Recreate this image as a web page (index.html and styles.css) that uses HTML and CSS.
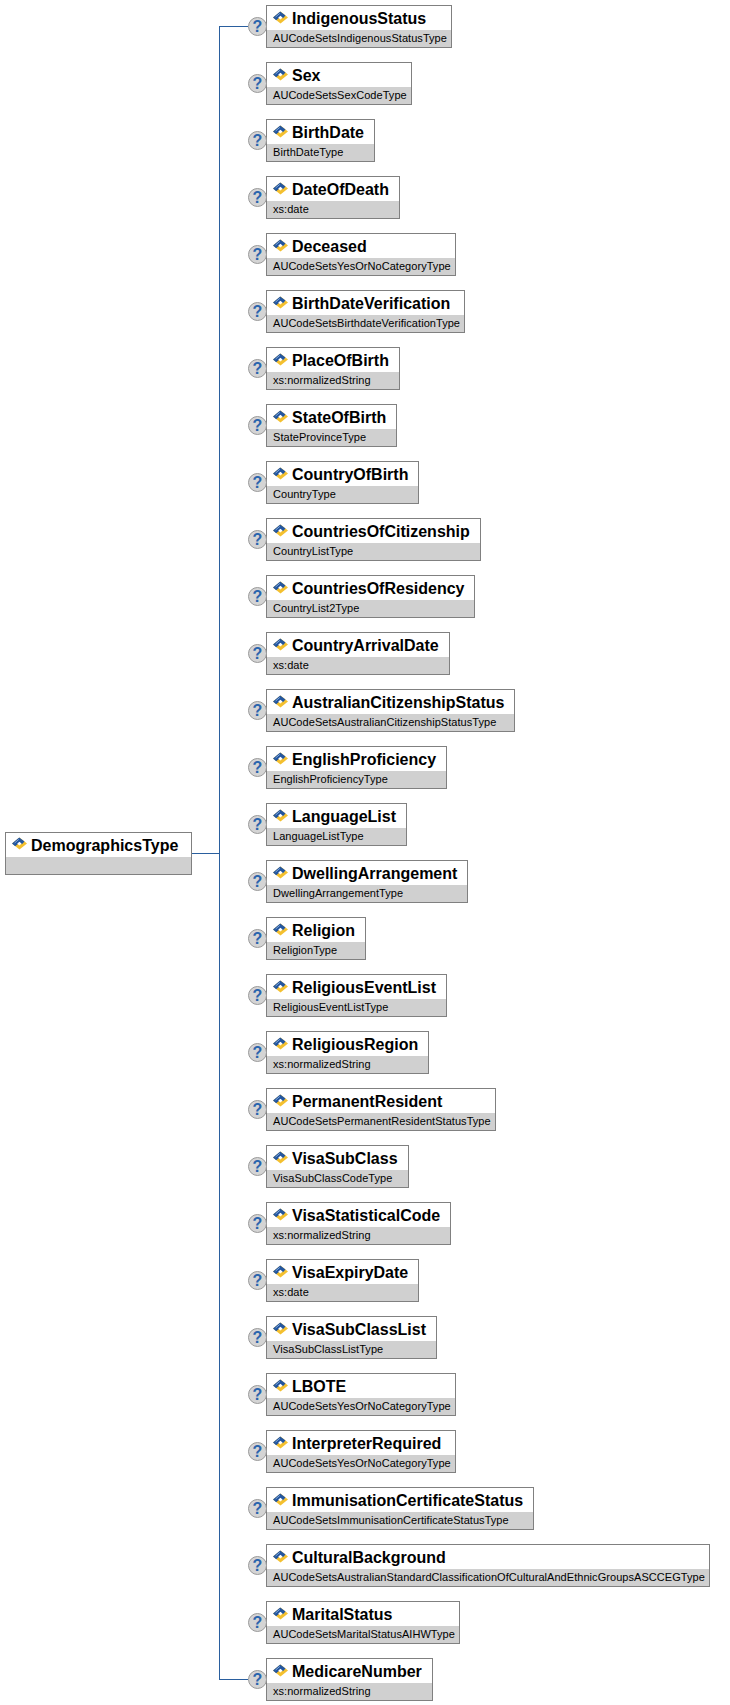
FILE: index.html
```html
<!DOCTYPE html>
<html lang="en">
<head>
<meta charset="utf-8">
<title>DemographicsType</title>
<link rel="stylesheet" href="styles.css">
</head>
<body>
<svg class="defs" width="0" height="0" aria-hidden="true"><defs><symbol id="el" viewBox="0 0 15 13"><path d="M7.5 .4 15 6.5 7.5 12.6 0 6.5z" fill="#f4c02f"/><path d="M7.2 .4 0 6.5l3.2 2.7L7.6 5.4l2.3 1.8 2.6-2.6z" fill="#23569f"/><path d="M5.2 6.7 7.4 4.7 9.6 6.6 7.5 8.6z" fill="#fff"/><path d="M2.6 6 6.8 2.4" stroke="#7fa3d6" stroke-width="1" fill="none"/></symbol></defs></svg>
<main class="tree">
  <div class="box root">
    <div class="name"><svg class="icon"><use href="#el"/></svg><span>DemographicsType</span></div>
    <div class="type root-type"></div>
  </div>
  <div class="stub"></div>
  <div class="children">
    <div class="row"><div class="elbow"></div><span class="help">?</span><div class="box"><div class="name"><svg class="icon"><use href="#el"/></svg><span>IndigenousStatus</span></div><div class="type">AUCodeSetsIndigenousStatusType</div></div></div>
    <div class="row"><div class="elbow"></div><span class="help">?</span><div class="box"><div class="name"><svg class="icon"><use href="#el"/></svg><span>Sex</span></div><div class="type">AUCodeSetsSexCodeType</div></div></div>
    <div class="row"><div class="elbow"></div><span class="help">?</span><div class="box"><div class="name"><svg class="icon"><use href="#el"/></svg><span>BirthDate</span></div><div class="type">BirthDateType</div></div></div>
    <div class="row"><div class="elbow"></div><span class="help">?</span><div class="box"><div class="name"><svg class="icon"><use href="#el"/></svg><span>DateOfDeath</span></div><div class="type">xs:date</div></div></div>
    <div class="row"><div class="elbow"></div><span class="help">?</span><div class="box"><div class="name"><svg class="icon"><use href="#el"/></svg><span>Deceased</span></div><div class="type">AUCodeSetsYesOrNoCategoryType</div></div></div>
    <div class="row"><div class="elbow"></div><span class="help">?</span><div class="box"><div class="name"><svg class="icon"><use href="#el"/></svg><span>BirthDateVerification</span></div><div class="type">AUCodeSetsBirthdateVerificationType</div></div></div>
    <div class="row"><div class="elbow"></div><span class="help">?</span><div class="box"><div class="name"><svg class="icon"><use href="#el"/></svg><span>PlaceOfBirth</span></div><div class="type">xs:normalizedString</div></div></div>
    <div class="row"><div class="elbow"></div><span class="help">?</span><div class="box"><div class="name"><svg class="icon"><use href="#el"/></svg><span>StateOfBirth</span></div><div class="type">StateProvinceType</div></div></div>
    <div class="row"><div class="elbow"></div><span class="help">?</span><div class="box"><div class="name"><svg class="icon"><use href="#el"/></svg><span>CountryOfBirth</span></div><div class="type">CountryType</div></div></div>
    <div class="row"><div class="elbow"></div><span class="help">?</span><div class="box"><div class="name"><svg class="icon"><use href="#el"/></svg><span>CountriesOfCitizenship</span></div><div class="type">CountryListType</div></div></div>
    <div class="row"><div class="elbow"></div><span class="help">?</span><div class="box"><div class="name"><svg class="icon"><use href="#el"/></svg><span>CountriesOfResidency</span></div><div class="type">CountryList2Type</div></div></div>
    <div class="row"><div class="elbow"></div><span class="help">?</span><div class="box"><div class="name"><svg class="icon"><use href="#el"/></svg><span>CountryArrivalDate</span></div><div class="type">xs:date</div></div></div>
    <div class="row"><div class="elbow"></div><span class="help">?</span><div class="box"><div class="name"><svg class="icon"><use href="#el"/></svg><span>AustralianCitizenshipStatus</span></div><div class="type">AUCodeSetsAustralianCitizenshipStatusType</div></div></div>
    <div class="row"><div class="elbow"></div><span class="help">?</span><div class="box"><div class="name"><svg class="icon"><use href="#el"/></svg><span>EnglishProficiency</span></div><div class="type">EnglishProficiencyType</div></div></div>
    <div class="row"><div class="elbow"></div><span class="help">?</span><div class="box"><div class="name"><svg class="icon"><use href="#el"/></svg><span>LanguageList</span></div><div class="type">LanguageListType</div></div></div>
    <div class="row"><div class="elbow"></div><span class="help">?</span><div class="box"><div class="name"><svg class="icon"><use href="#el"/></svg><span>DwellingArrangement</span></div><div class="type">DwellingArrangementType</div></div></div>
    <div class="row"><div class="elbow"></div><span class="help">?</span><div class="box"><div class="name"><svg class="icon"><use href="#el"/></svg><span>Religion</span></div><div class="type">ReligionType</div></div></div>
    <div class="row"><div class="elbow"></div><span class="help">?</span><div class="box"><div class="name"><svg class="icon"><use href="#el"/></svg><span>ReligiousEventList</span></div><div class="type">ReligiousEventListType</div></div></div>
    <div class="row"><div class="elbow"></div><span class="help">?</span><div class="box"><div class="name"><svg class="icon"><use href="#el"/></svg><span>ReligiousRegion</span></div><div class="type">xs:normalizedString</div></div></div>
    <div class="row"><div class="elbow"></div><span class="help">?</span><div class="box"><div class="name"><svg class="icon"><use href="#el"/></svg><span>PermanentResident</span></div><div class="type">AUCodeSetsPermanentResidentStatusType</div></div></div>
    <div class="row"><div class="elbow"></div><span class="help">?</span><div class="box"><div class="name"><svg class="icon"><use href="#el"/></svg><span>VisaSubClass</span></div><div class="type">VisaSubClassCodeType</div></div></div>
    <div class="row"><div class="elbow"></div><span class="help">?</span><div class="box"><div class="name"><svg class="icon"><use href="#el"/></svg><span>VisaStatisticalCode</span></div><div class="type">xs:normalizedString</div></div></div>
    <div class="row"><div class="elbow"></div><span class="help">?</span><div class="box"><div class="name"><svg class="icon"><use href="#el"/></svg><span>VisaExpiryDate</span></div><div class="type">xs:date</div></div></div>
    <div class="row"><div class="elbow"></div><span class="help">?</span><div class="box"><div class="name"><svg class="icon"><use href="#el"/></svg><span>VisaSubClassList</span></div><div class="type">VisaSubClassListType</div></div></div>
    <div class="row"><div class="elbow"></div><span class="help">?</span><div class="box"><div class="name"><svg class="icon"><use href="#el"/></svg><span>LBOTE</span></div><div class="type">AUCodeSetsYesOrNoCategoryType</div></div></div>
    <div class="row"><div class="elbow"></div><span class="help">?</span><div class="box"><div class="name"><svg class="icon"><use href="#el"/></svg><span>InterpreterRequired</span></div><div class="type">AUCodeSetsYesOrNoCategoryType</div></div></div>
    <div class="row"><div class="elbow"></div><span class="help">?</span><div class="box"><div class="name"><svg class="icon"><use href="#el"/></svg><span>ImmunisationCertificateStatus</span></div><div class="type">AUCodeSetsImmunisationCertificateStatusType</div></div></div>
    <div class="row"><div class="elbow"></div><span class="help">?</span><div class="box"><div class="name"><svg class="icon"><use href="#el"/></svg><span>CulturalBackground</span></div><div class="type">AUCodeSetsAustralianStandardClassificationOfCulturalAndEthnicGroupsASCCEGType</div></div></div>
    <div class="row"><div class="elbow"></div><span class="help">?</span><div class="box"><div class="name"><svg class="icon"><use href="#el"/></svg><span>MaritalStatus</span></div><div class="type">AUCodeSetsMaritalStatusAIHWType</div></div></div>
    <div class="row"><div class="elbow"></div><span class="help">?</span><div class="box"><div class="name"><svg class="icon"><use href="#el"/></svg><span>MedicareNumber</span></div><div class="type">xs:normalizedString</div></div></div>
  </div>
</main>
</body>
</html>
```
FILE: styles.css
```css
html, body {
  margin: 0;
  padding: 0;
  background: #fff;
}

body {
  font-family: "Liberation Sans", Arial, sans-serif;
  color: #000;
}

.defs {
  display: block;
  height: 0;
}

.tree {
  display: flex;
  align-items: center;
  padding: 5px 0 0 5px;
}

.box {
  box-sizing: border-box;
  height: 43px;
  border: 1px solid #808080;
  background: #fff;
  display: flex;
  flex-direction: column;
  flex: none;
}

.root {
  width: 187px;
}

.children .box {
  margin-bottom: 14px;
}

.children .row:last-child .box {
  margin-bottom: 0;
}

.name {
  height: 24px;
  display: flex;
  align-items: center;
  padding: 2px 10px 0 6px;
  box-sizing: border-box;
  gap: 4px;
  font-size: 16px;
  font-weight: 700;
  line-height: 20px;
  white-space: nowrap;
}

.icon {
  width: 15px;
  height: 13px;
  flex: none;
  margin-top: -4px;
}

.type {
  flex: 1;
  background: #d0d0d0;
  font-size: 11px;
  letter-spacing: 0.05px;
  line-height: 17px;
  padding: 0 4px 0 6px;
  white-space: nowrap;
}

.stub {
  width: 27px;
  height: 1px;
  background: #2a5f9e;
  flex: none;
}

.children {
  display: flex;
  flex-direction: column;
  align-items: flex-start;
}

.row {
  display: flex;
  align-items: center;
}

.elbow {
  width: 29px;
  flex: none;
  align-self: stretch;
  box-sizing: border-box;
  border-left: 1px solid #2a5f9e;
}

.row:first-child .elbow {
  margin-top: 21px;
  border-top: 1px solid #2a5f9e;
}

.row:last-child .elbow {
  align-self: flex-start;
  height: 22px;
  border-bottom: 1px solid #2a5f9e;
}

.help {
  box-sizing: border-box;
  width: 19px;
  height: 19px;
  margin: 0 -1px 14px 0;
  border: 1px solid #9a9a9a;
  border-radius: 50%;
  background: #d4d4d4;
  color: #2a64ad;
  font-size: 16px;
  font-weight: 700;
  line-height: 17px;
  text-align: center;
  flex: none;
  position: relative;
}

.row:last-child .help {
  margin-bottom: 0;
}
```
